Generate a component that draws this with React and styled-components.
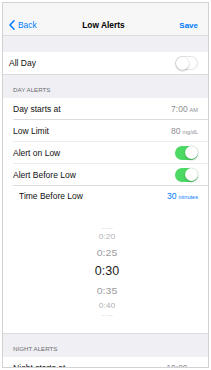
import styled, { createGlobalStyle } from 'styled-components';

const Global = createGlobalStyle`
    body {
        margin: 0;
        background: #ffffff;
        font-family: "Liberation Sans", Arial, sans-serif;
        -webkit-font-smoothing: antialiased;
    }
`;

const pickerItems = [
    { label: '0:15', h: 6, size: 6, squash: 0.35, color: '#d4d4d8' },
    { label: '0:20', h: 12, size: 8.5, squash: 0.75, color: '#b0b0b5' },
    { label: '0:25', h: 18, size: 10.5, squash: 0.92, color: '#9c9ca1' },
    { label: '0:30', h: 20, size: 12.5, squash: 1, color: '#1c1c1e' },
    { label: '0:35', h: 18, size: 10.5, squash: 0.92, color: '#9c9ca1' },
    { label: '0:40', h: 13, size: 8.5, squash: 0.75, color: '#b0b0b5' },
    { label: '0:45', h: 5, size: 6, squash: 0.35, color: '#d4d4d8' },
];

function Toggle({ on }) {
    return (
        <Track $on={on}>
            <Knob />
        </Track>
    );
}

function App() {
    return (
        <>
            <Global />
            <Frame>
                <NavBar>
                    <BackButton>
                        <svg width="6" height="10" viewBox="0 0 6 10">
                            <polyline points="5,0.8 1,5 5,9.2" fill="none" stroke="#007aff" strokeWidth="1.5" strokeLinecap="round" strokeLinejoin="round" />
                        </svg>
                        Back
                    </BackButton>
                    <Title>Low Alerts</Title>
                    <SaveButton>Save</SaveButton>
                </NavBar>

                <Spacer />

                <Group>
                    <SoloRow>
                        <Label>All Day</Label>
                        <Toggle on={false} />
                    </SoloRow>
                </Group>

                <SectionHeader>DAY ALERTS</SectionHeader>

                <Group>
                    <Row>
                        <Label>Day starts at</Label>
                        <Value>7:00<Unit>AM</Unit></Value>
                    </Row>
                    <Row $faint>
                        <Label>Low Limit</Label>
                        <Value>80<Unit>mg/dL</Unit></Value>
                    </Row>
                    <Row $faint>
                        <Label>Alert on Low</Label>
                        <Toggle on />
                    </Row>
                    <Row>
                        <Label>Alert Before Low</Label>
                        <Toggle on />
                    </Row>
                    <SubRow>
                        <Label>Time Before Low</Label>
                        <Value $blue>30<Unit>minutes</Unit></Value>
                    </SubRow>
                    <Picker>
                        {pickerItems.map((item) => (
                            <PickerItem key={item.label} $h={item.h} $size={item.size} $color={item.color}>
                                <span style={{ transform: `scaleY(${item.squash})` }}>{item.label}</span>
                            </PickerItem>
                        ))}
                    </Picker>
                </Group>

                <SectionHeader>NIGHT ALERTS</SectionHeader>

                <Group>
                    <Row>
                        <Label>Night starts at</Label>
                        <Value>10:00<Unit>PM</Unit></Value>
                    </Row>
                </Group>
            </Frame>
        </>
    );
}

const Frame = styled.div`
    display: flex;
    flex-direction: column;
    box-sizing: border-box;
    width: 207px;
    height: 366px;
    margin: 2px 2px 0 2px;
    border: 1px solid #d2d2d2;
    background: #efeff4;
    overflow: hidden;
`;
const NavBar = styled.div`
    display: grid;
    grid-template-columns: 1fr auto 1fr;
    align-items: center;
    flex-shrink: 0;
    box-sizing: border-box;
    height: 33px;
    padding: 12px 10px 0 6px;
    background: #f7f7f7;
    border-bottom: 1px solid #dedee2;
`;
const BackButton = styled.div`
    display: flex;
    align-items: center;
    gap: 3px;
    height: 20px;
    color: #007aff;
    font-size: 8.4px;
`;
const Title = styled.div`
    font-weight: 700;
    font-size: 8.4px;
    color: #000;
`;
const SaveButton = styled.div`
    justify-self: end;
    color: #007aff;
    font-weight: 700;
    font-size: 8px;
`;
const Spacer = styled.div`
    flex-shrink: 0;
    height: 16px;
`;
const Group = styled.div`
    display: flex;
    flex-direction: column;
    flex-shrink: 0;
    background: #ffffff;
`;
const SoloRow = styled.div`
    display: flex;
    align-items: center;
    justify-content: space-between;
    height: 22px;
    padding: 0 10px 0 6px;
`;
const Row = styled.div`
    display: flex;
    align-items: center;
    justify-content: space-between;
    box-sizing: border-box;
    height: 22px;
    margin-left: 10px;
    padding-right: 10px;
    border-bottom: 1px solid ${props => props.$faint ? '#ececf0' : '#dcdce0'};
`;
const SubRow = styled.div`
    display: flex;
    align-items: center;
    justify-content: space-between;
    height: 19px;
    padding: 0 10px 0 16px;
`;
const Label = styled.div`
    font-size: 8.5px;
    color: #111;
`;
const Value = styled.div`
    display: flex;
    align-items: baseline;
    gap: 2px;
    font-size: 8.5px;
    color: ${props => props.$blue ? '#007aff' : '#8e8e93'};
`;
const Unit = styled.span`
    font-size: 5.6px;
`;
const SectionHeader = styled.div`
    display: flex;
    align-items: flex-end;
    flex-shrink: 0;
    box-sizing: border-box;
    height: 24px;
    padding: 0 0 4px 10px;
    border-top: 1px solid #dcdce0;
    font-size: 6.2px;
    line-height: 8px;
    color: #6d6d72;
`;
const Track = styled.div`
    display: flex;
    justify-content: ${props => props.$on ? 'flex-end' : 'flex-start'};
    align-items: center;
    box-sizing: border-box;
    width: 23px;
    height: 14px;
    padding: 0.5px;
    border-radius: 7px;
    background: ${props => props.$on ? '#4cd964' : '#ffffff'};
    box-shadow: ${props => props.$on ? 'none' : 'inset 0 0 0 1px #e4e4e8'};
`;
const Knob = styled.div`
    width: 13px;
    height: 13px;
    border-radius: 50%;
    background: #ffffff;
    box-shadow: 0 1px 2px rgba(0, 0, 0, 0.25), 0 0 0 0.5px rgba(0, 0, 0, 0.06);
`;
const Picker = styled.div`
    display: flex;
    flex-direction: column;
    align-items: center;
    height: 128px;
    box-sizing: border-box;
    padding: 20px 0 0 3px;
`;
const PickerItem = styled.div`
    display: flex;
    align-items: center;
    justify-content: center;
    height: ${props => props.$h}px;
    font-size: ${props => props.$size}px;
    color: ${props => props.$color};

    span {
        display: inline-block;
    }
`;

export default App;
